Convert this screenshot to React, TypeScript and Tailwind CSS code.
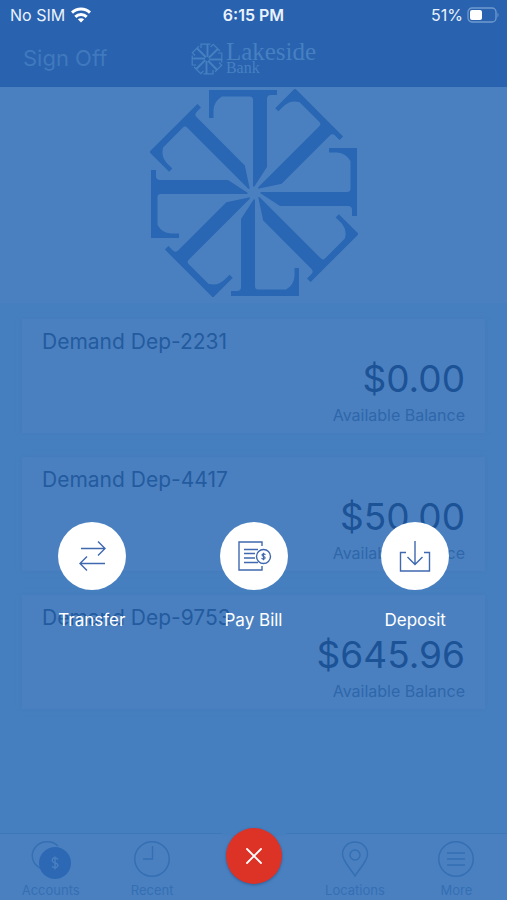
import type { ReactNode } from 'react';

const ARMS = [0, 45, 90, 135, 180, 225, 270, 315];

function Wheel({ className }: { className: string }) {
  return (
    <svg viewBox="-104 -104 208 208" className={className} fill="currentColor" aria-hidden="true">
      {ARMS.map((angle) => (
        <path
          key={angle}
          transform={`rotate(${angle})`}
          d="M0 6 L-13 26 V94 Q-13 98 -17 98 H-23 V103 H45 V75 H40.5 V83 Q40 92 32 96.500 H4 Q1 96.500 1 93 V7 Z"
        />
      ))}
    </svg>
  );
}

function BrandMark() {
  return (
    <svg
      viewBox="0 0 32 32"
      className="size-[32px] shrink-0"
      fill="none"
      stroke="currentColor"
      strokeWidth="1.2"
      aria-hidden="true"
    >
      {ARMS.map((angle) => (
        <g key={angle} transform={`rotate(${angle} 16 16)`}>
          <path d="M15.500 18 V31" strokeWidth="1.9" />
          <path d="M12.500 30.800 H22 V27" />
        </g>
      ))}
    </svg>
  );
}

const ACCOUNTS = [
  { name: 'Demand Dep-2231', balance: '$0.00' },
  { name: 'Demand Dep-4417', balance: '$50.00' },
  { name: 'Demand Dep-9753', balance: '$645.96' },
];

function StatusBar() {
  return (
    <div className="grid h-[30px] grid-cols-3 items-center px-[8px] text-[16px] text-[#eaf2fc]">
      <div className="flex items-center gap-[6px] pl-[2px]">
        <span>No SIM</span>
        <svg width="20" height="16" viewBox="0 0 20 16" fill="none" stroke="#fff" strokeWidth="3" aria-hidden="true">
          <path d="M1 5.600 C6 0.800 14 0.800 19 5.600" />
          <path d="M4.300 9.800 C7.500 6.800 12.500 6.800 15.700 9.800" />
          <path d="M10 15.500 L6.800 12.300 C8.400 11 11.600 11 13.200 12.300 Z" fill="#fff" stroke="none" />
        </svg>
      </div>
      <div className="text-center font-semibold">6:15 PM</div>
      <div className="flex items-center justify-end gap-[4px]">
        <span>51%</span>
        <svg width="32" height="16" viewBox="0 0 32 16" aria-hidden="true">
          <rect x="1" y="1" width="28" height="14" rx="4" fill="none" stroke="#6f9ad0" strokeWidth="1.3" />
          <rect x="3" y="3" width="12" height="10" rx="2" fill="#fff" />
          <path d="M30.500 5.500 Q32.500 8 30.500 10.500 Z" fill="#6f9ad0" />
        </svg>
      </div>
    </div>
  );
}

function AccountCard({ name, balance }: { name: string; balance: string }) {
  return (
    <li className="flex h-[114px] flex-col bg-[#4b80c0] px-[20px] pt-[10px] shadow-[0_0_5px_#437cbb]">
      <h2 className="text-[21px] leading-[26px] text-[#235b9f]">{name}</h2>
      <p className="mt-[2px] text-right text-[37px] leading-[44px] text-[#1c5296]">{balance}</p>
      <p className="mt-[4px] text-right text-[16px] leading-[20px] text-[#2e67aa]">Available Balance</p>
    </li>
  );
}

function Tab({ label, children }: { label: string; children: ReactNode }) {
  return (
    <button type="button" className="flex h-full flex-1 flex-col items-center pt-[6px] text-[#346fb4]">
      <svg width="42" height="40" viewBox="0 0 42 40" fill="none" stroke="currentColor" strokeWidth="1.5" aria-hidden="true">
        {children}
      </svg>
      <span className="mt-[1px] text-[13px] leading-[18px]">{label}</span>
    </button>
  );
}

function Action({ label, children }: { label: string; children: ReactNode }) {
  return (
    <button type="button" className="flex flex-1 flex-col items-center gap-[18px] text-white">
      <span className="flex size-[68px] items-center justify-center rounded-full bg-white">
        <svg width="36" height="36" viewBox="0 0 36 36" fill="none" stroke="#3f68ae" strokeWidth="1.4" aria-hidden="true">
          {children}
        </svg>
      </span>
      <span className="text-[17px] leading-[24px]">{label}</span>
    </button>
  );
}

export default function App() {
  return (
    <div className="relative flex min-h-screen flex-col bg-[#467fbf] font-['Inter','Liberation_Sans',sans-serif]">
      <header className="bg-[#2962af]">
        <StatusBar />
        <div className="grid h-[57px] grid-cols-3 items-center px-[23px]">
          <button type="button" className="text-left text-[22px] text-[#4079bd]">Sign Off</button>
          <div className="flex items-center justify-center gap-[3px] text-[#4680c1]">
            <BrandMark />
            <div className="font-['Liberation_Serif',serif]">
              <div className="text-[25px] leading-[19px]">Lakeside</div>
              <div className="text-[16px] leading-[14px]">Bank</div>
            </div>
          </div>
        </div>
      </header>

      <main className="flex-1">
        <div className="flex h-[216px] justify-center bg-[#4a80c0] pt-[2px]">
          <Wheel className="size-[208px] text-[#2966b3]" />
        </div>
        <ul className="flex flex-col gap-[24px] px-[22px] py-[16px]">
          {ACCOUNTS.map((account) => (
            <AccountCard key={account.name} name={account.name} balance={account.balance} />
          ))}
        </ul>
      </main>

      <div className="pointer-events-none absolute inset-0 flex items-end px-[11px] pb-[268px]">
        <div className="pointer-events-auto flex flex-1">
          <Action label="Transfer">
            <path d="M7 10.500 H31 M24 3.500 L31 10.500 L24 17.500 M31 25.500 H6 M13 18.500 L6 25.500 L13 32.500" />
          </Action>
          <Action label="Pay Bill">
            <path d="M26 8 V4 H3 V32 H26 V28 M8 11.500 H22 M8 15.500 H19 M8 20 H19 M8 24.500 H22" />
            <circle cx="27.500" cy="18.500" r="7" />
            <path d="M29.500 16.800 Q27.500 15 26 16.800 Q26 18.200 27.500 18.500 Q29.500 19 29 20.300 Q27.500 21.800 25.500 20.300 M27.500 14.800 V22.300" strokeWidth="1.1" />
          </Action>
          <Action label="Deposit">
            <path d="M9 14.500 H3.500 V33 H32.500 V14.500 H27 M18 3 V26 M10.500 19 L18 26.500 L25.500 19" />
          </Action>
        </div>
      </div>

      <nav className="flex h-[67px] border-t border-[#3f78b9] bg-[#4a80c0]">
        <Tab label="Accounts">
          <path d="M28 6 A15 14 0 1 0 11 28.500" />
          <circle cx="25" cy="23" r="16" fill="#2d68b5" stroke="none" />
          <path d="M28 19.500 Q25 16.500 22.500 19 Q21.500 22 25 23 Q29 24 27.500 26.500 Q25 29 22 26.500 M25 16.500 V29.500" stroke="#4a80c0" strokeWidth="1.4" />
        </Tab>
        <Tab label="Recent">
          <circle cx="21" cy="19" r="17.200" />
          <path d="M21.500 6 V19 H12" />
        </Tab>
        <div className="-mt-[6px] flex flex-1 justify-center">
          <div className="h-[8px] w-[64px] bg-[#467fbf]">
            <button
              type="button"
              aria-label="Close"
              className="mx-auto flex size-[56px] items-center justify-center rounded-full bg-[#dd3226] shadow-[0_1px_3px_#2e5f99]"
            >
              <svg width="18" height="18" viewBox="0 0 18 18" stroke="#fff" strokeWidth="1.8" strokeLinecap="round" aria-hidden="true">
                <path d="M2 2 L16 16 M16 2 L2 16" />
              </svg>
            </button>
          </div>
        </div>
        <Tab label="Locations">
          <path d="M21 36 C17 29 8.500 21.500 8.500 14 A12.500 12 0 0 1 33.500 14 C33.500 21.500 25 29 21 36 Z" />
          <circle cx="21" cy="15" r="5" />
        </Tab>
        <Tab label="More">
          <circle cx="21" cy="19" r="17.200" />
          <path d="M12 13 H30 M12 19 H30 M12 25 H30" />
        </Tab>
      </nav>
    </div>
  );
}
